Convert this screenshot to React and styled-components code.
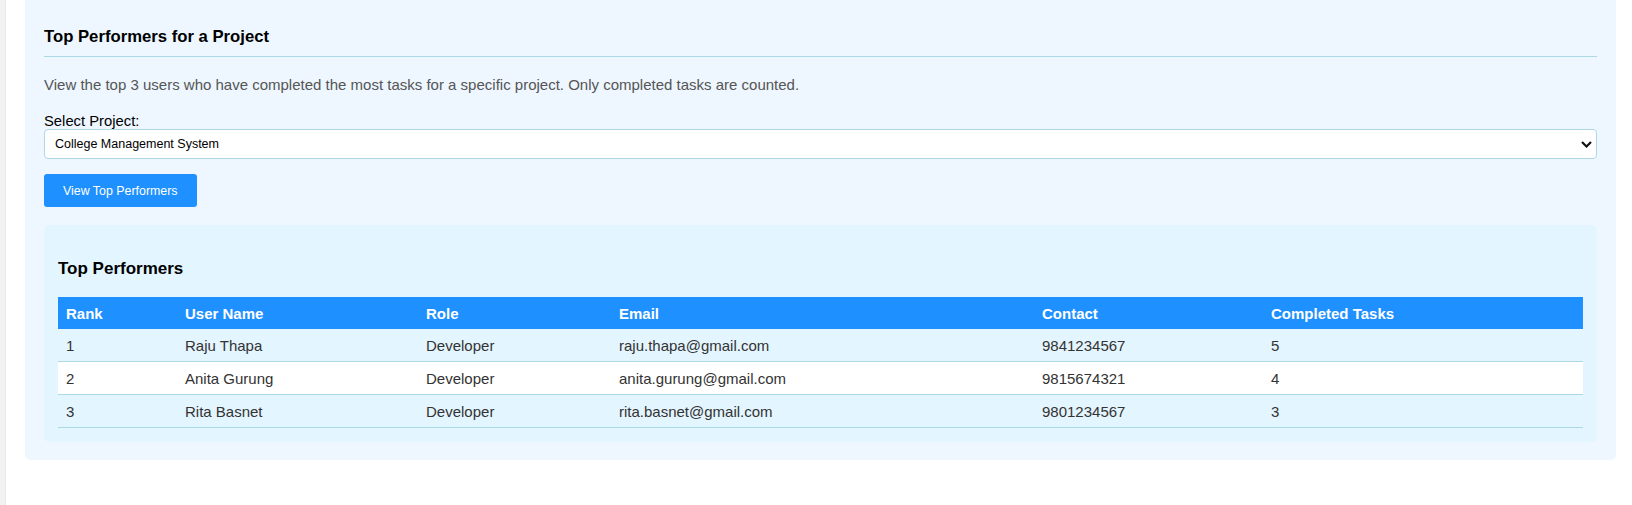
import React, { useState } from "react";
import styled, { createGlobalStyle } from "styled-components";

const GlobalStyle = createGlobalStyle`
  html, body {
    margin: 0;
    padding: 0;
    background: #ffffff;
    font-family: "Liberation Sans", Arial, sans-serif;
  }
`;

const projects = [
  "College Management System",
  "Hospital Management System",
  "E-Commerce Platform",
];

const performers = [
  { rank: 1, name: "Raju Thapa", role: "Developer", email: "raju.thapa@gmail.com", contact: "9841234567", tasks: 5 },
  { rank: 2, name: "Anita Gurung", role: "Developer", email: "anita.gurung@gmail.com", contact: "9815674321", tasks: 4 },
  { rank: 3, name: "Rita Basnet", role: "Developer", email: "rita.basnet@gmail.com", contact: "9801234567", tasks: 3 },
];

const columns = [
  { label: "Rank", width: 119 },
  { label: "User Name", width: 241 },
  { label: "Role", width: 193 },
  { label: "Email", width: 423 },
  { label: "Contact", width: 229 },
  { label: "Completed Tasks" },
];

function App() {
  const [project, setProject] = useState(projects[0]);

  return (
    <Page>
      <GlobalStyle />
      <SideEdge />
      <Main>
        <Panel>
          <Title>Top Performers for a Project</Title>
          <Description>
            View the top 3 users who have completed the most tasks for a specific project. Only completed tasks are counted.
          </Description>
          <Label htmlFor="project">Select Project:</Label>
          <SelectWrap>
            <Select id="project" value={project} onChange={(e) => setProject(e.target.value)}>
              {projects.map((p) => (
                <option key={p} value={p}>{p}</option>
              ))}
            </Select>
            <Chevron width="11" height="7" viewBox="0 0 11 7">
              <path d="M1 1l4.5 4.5L10 1" fill="none" stroke="#111" strokeWidth="2.2" />
            </Chevron>
          </SelectWrap>
          <Button>View Top Performers</Button>

          <Results>
            <SubTitle>Top Performers</SubTitle>
            <Table>
              <colgroup>
                {columns.map((c) => (
                  <col key={c.label} style={c.width ? { width: c.width } : undefined} />
                ))}
              </colgroup>
              <thead>
                <tr>
                  {columns.map((c) => (
                    <Th key={c.label}>{c.label}</Th>
                  ))}
                </tr>
              </thead>
              <tbody>
                {performers.map((p, i) => (
                  <Row key={p.rank} striped={i % 2 === 1}>
                    <Td>{p.rank}</Td>
                    <Td>{p.name}</Td>
                    <Td>{p.role}</Td>
                    <Td>{p.email}</Td>
                    <Td>{p.contact}</Td>
                    <Td>{p.tasks}</Td>
                  </Row>
                ))}
              </tbody>
            </Table>
          </Results>
        </Panel>
      </Main>
    </Page>
  );
}

const Page = styled.div`
  display: flex;
  min-height: 505px;
`;

const SideEdge = styled.div`
  width: 5px;
  flex-shrink: 0;
  background: #f2f2f2;
  border-right: 1px solid #e9e9e9;
`;

const Main = styled.div`
  flex: 1;
  padding: 0 16px 0 19px;
`;

const Panel = styled.section`
  background: #eef7ff;
  padding: 27px 19px 18px;
  border-radius: 0 0 5px 5px;
`;

const Title = styled.h2`
  margin: 0;
  padding-bottom: 9px;
  font-size: 16.7px;
  font-weight: 700;
  color: #000;
  border-bottom: 1px solid #add8e6;
`;

const Description = styled.p`
  margin: 19px 0 20px;
  font-size: 15px;
  color: #555;
`;

const Label = styled.label`
  display: block;
  font-size: 14.8px;
  color: #000;
`;

const SelectWrap = styled.div`
  position: relative;
`;

const Select = styled.select`
  appearance: none;
  display: block;
  width: 100%;
  height: 30px;
  padding: 0 10px;
  font-family: "Liberation Sans", Arial, sans-serif;
  font-size: 12.5px;
  color: #000;
  background: #fff;
  border: 1px solid #add8e6;
  border-radius: 4px;
  outline: none;
`;

const Chevron = styled.svg`
  position: absolute;
  right: 5px;
  top: 12px;
  pointer-events: none;
`;

const Button = styled.button`
  display: block;
  margin-top: 15px;
  height: 33px;
  padding: 0 19px;
  font-family: "Liberation Sans", Arial, sans-serif;
  font-size: 12.4px;
  color: #fff;
  background: #1e90ff;
  border: none;
  border-radius: 3px;
  cursor: pointer;
`;

const Results = styled.div`
  margin-top: 18px;
  padding: 14px;
  background: #e3f5ff;
  border-radius: 5px;
`;

const SubTitle = styled.h3`
  margin: 20px 0 18px;
  font-size: 17px;
  font-weight: 700;
  color: #000;
`;

const Table = styled.table`
  width: 100%;
  table-layout: fixed;
  border-collapse: collapse;
  font-size: 15px;
`;

const Th = styled.th`
  text-align: left;
  padding: 7.5px 8px;
  background: #1e90ff;
  color: #fff;
  font-weight: 700;
`;

const Row = styled.tr`
  background: ${({ striped }) => (striped ? "#ffffff" : "transparent")};
  border-bottom: 1px solid #add8e6;
`;

const Td = styled.td`
  padding: 7.5px 8px;
  color: #333;
`;

export default App;
